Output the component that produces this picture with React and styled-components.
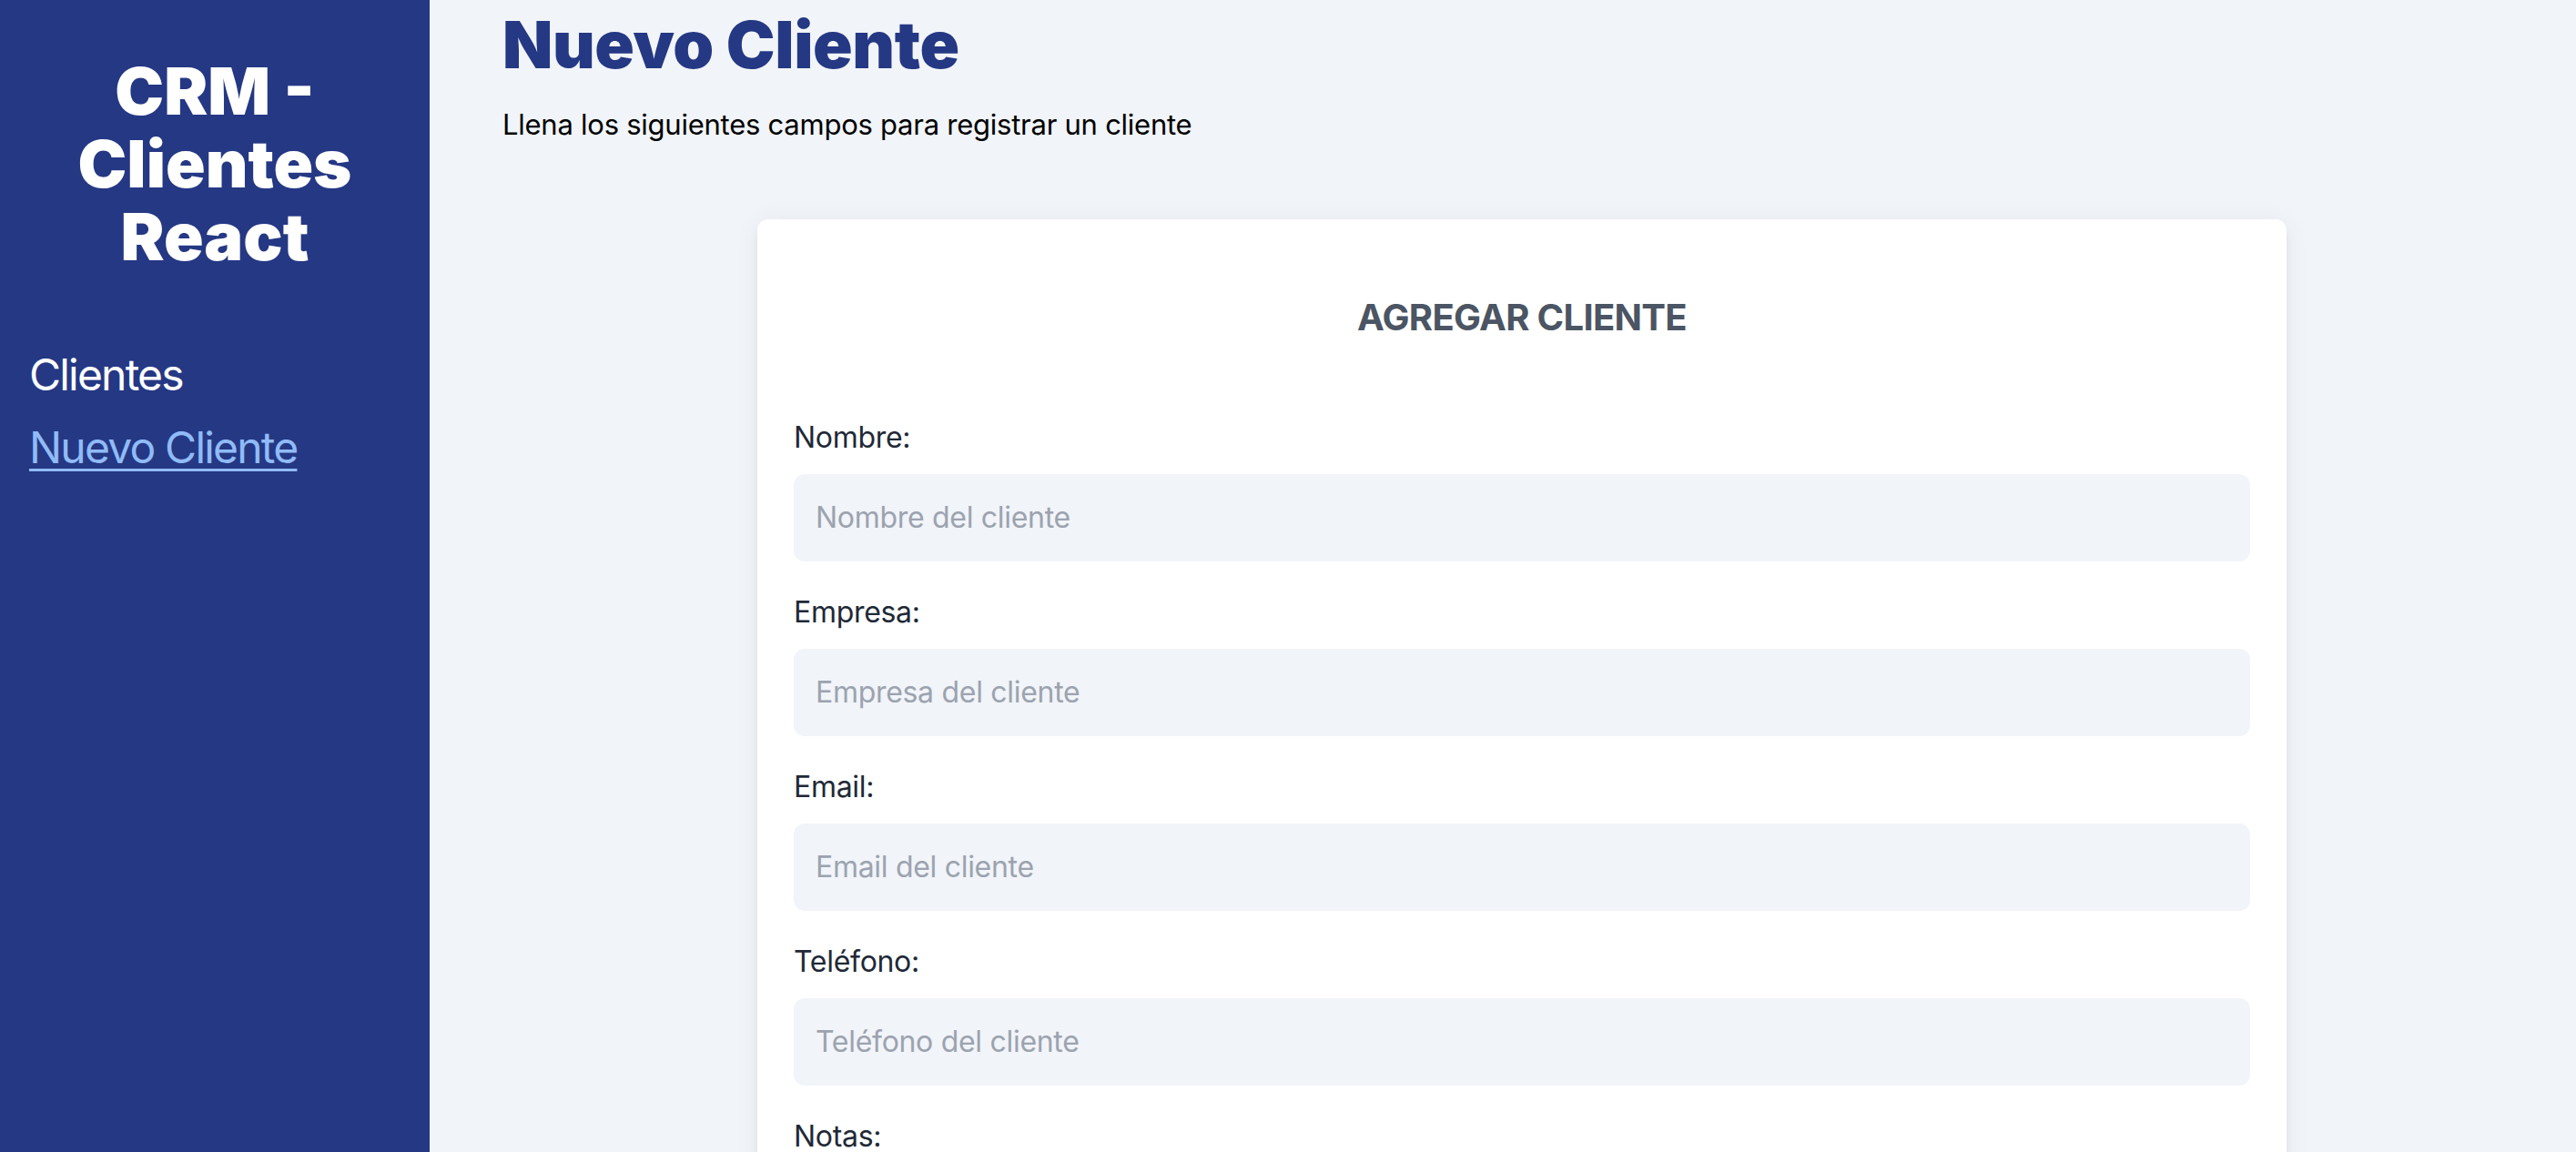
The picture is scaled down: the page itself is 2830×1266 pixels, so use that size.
import styled, { createGlobalStyle } from "styled-components"

const GlobalStyle = createGlobalStyle`
  * {
    box-sizing: border-box;
  }
  body {
    margin: 0;
    font-family: Inter, "Noto Sans", sans-serif;
    background: #f1f4f9;
  }
`

const Layout = styled.div`
  display: flex;
  height: 100vh;
  overflow: hidden;
`

const Sidebar = styled.aside`
  width: 472px;
  flex-shrink: 0;
  background: #253884;
  padding: 60px 32px;
`

const Brand = styled.h2`
  margin: 0;
  font-size: 72px;
  line-height: 80px;
  font-weight: 900;
  color: #fff;
  text-align: center;
`

const Nav = styled.nav`
  margin-top: 80px;
  display: flex;
  flex-direction: column;
  gap: 16px;
`

const NavLink = styled.a`
  display: block;
  font-size: 48px;
  line-height: 64px;
  letter-spacing: -1.8px;
  color: ${(props) => (props.active ? "#90bbf7" : "#fff")};
  text-decoration: ${(props) => (props.active ? "underline" : "none")};
  text-underline-offset: 6px;
  text-decoration-thickness: 3px;
`

const Main = styled.main`
  flex: 1;
  padding: 9px 80px 80px;
  overflow: hidden;
`

const Heading = styled.h1`
  margin: 0;
  font-size: 72px;
  line-height: 80px;
  font-weight: 900;
  letter-spacing: -0.4px;
  color: #253884;
`

const Intro = styled.p`
  margin: 24px 0 0;
  font-size: 31px;
  line-height: 48px;
  letter-spacing: -0.25px;
  color: #000;
`

const Card = styled.div`
  width: 1680px;
  margin: 80px 0 0 280px;
  background: #fff;
  border-radius: 12px;
  padding: 80px 40px;
  box-shadow: 0 8px 12px -2px rgba(0, 0, 0, 0.08), 0 0 28px rgba(0, 0, 0, 0.05);
`

const CardTitle = styled.h2`
  margin: 0;
  font-size: 40px;
  line-height: 56px;
  font-weight: 700;
  letter-spacing: -0.7px;
  color: #4b5563;
  text-align: center;
  text-transform: uppercase;
`

const Form = styled.form`
  margin-top: 80px;
`

const Field = styled.div`
  margin-bottom: 32px;
`

const Label = styled.label`
  display: block;
  font-size: 32px;
  line-height: 48px;
  letter-spacing: -0.3px;
  color: #1f2937;
`

const Input = styled.input`
  display: block;
  width: 100%;
  margin-top: 16px;
  padding: 24px;
  border: none;
  border-radius: 12px;
  background: #f1f4f9;
  font-family: inherit;
  font-size: 32px;
  line-height: 48px;
  letter-spacing: -0.3px;
  color: #1f2937;
  outline: none;

  &::placeholder {
    color: #9ca3af;
  }
`

const TextArea = styled(Input).attrs({ as: "textarea" })`
  height: 200px;
  resize: none;
`

const Submit = styled.button`
  width: 100%;
  margin-top: 40px;
  padding: 24px;
  border: none;
  border-radius: 12px;
  background: #253884;
  color: #fff;
  font-family: inherit;
  font-size: 36px;
  font-weight: 700;
  text-transform: uppercase;
`

const fields = [
  { id: "nombre", label: "Nombre:", placeholder: "Nombre del cliente", type: "text" },
  { id: "empresa", label: "Empresa:", placeholder: "Empresa del cliente", type: "text" },
  { id: "email", label: "Email:", placeholder: "Email del cliente", type: "email" },
  { id: "telefono", label: "Teléfono:", placeholder: "Teléfono del cliente", type: "tel" },
]

const App = () => {
  return (
    <>
      <GlobalStyle />
      <Layout>
        <Sidebar>
          <Brand>CRM - Clientes React</Brand>
          <Nav>
            <NavLink href="#">Clientes</NavLink>
            <NavLink href="#" active>
              Nuevo Cliente
            </NavLink>
          </Nav>
        </Sidebar>
        <Main>
          <Heading>Nuevo Cliente</Heading>
          <Intro>Llena los siguientes campos para registrar un cliente</Intro>
          <Card>
            <CardTitle>Agregar Cliente</CardTitle>
            <Form onSubmit={(e) => e.preventDefault()}>
              {fields.map((f) => (
                <Field key={f.id}>
                  <Label htmlFor={f.id}>{f.label}</Label>
                  <Input id={f.id} type={f.type} placeholder={f.placeholder} />
                </Field>
              ))}
              <Field>
                <Label htmlFor="notas">Notas:</Label>
                <TextArea id="notas" placeholder="Notas del cliente" />
              </Field>
              <Submit type="submit">Agregar Cliente</Submit>
            </Form>
          </Card>
        </Main>
      </Layout>
    </>
  )
}

export default App
